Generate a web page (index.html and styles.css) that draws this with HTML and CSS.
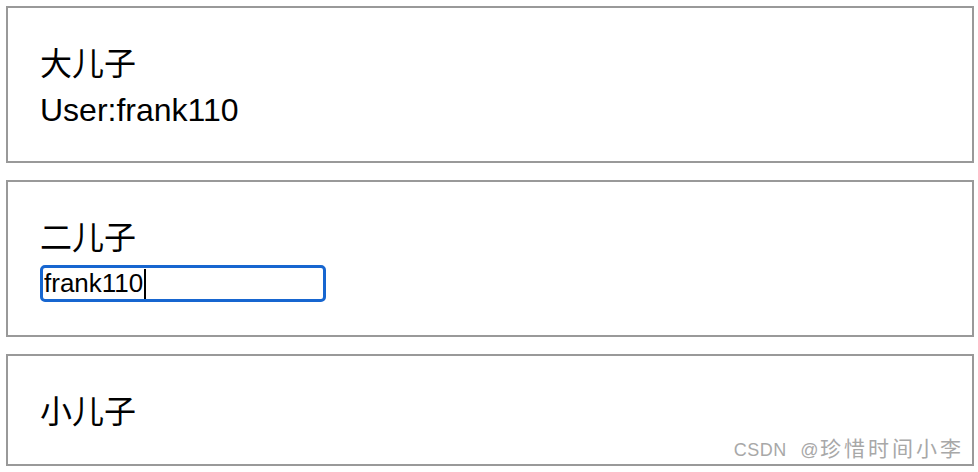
FILE: index.html
```html
<!DOCTYPE html>
<html lang="zh">
<head>
<meta charset="utf-8">
<title>Sons</title>
<link rel="stylesheet" href="styles.css">
</head>
<body>
<div class="page">
  <section class="card">
    <div class="row title">大儿子</div>
    <div class="row">User:frank110</div>
  </section>
  <section class="card">
    <div class="row title">二儿子</div>
    <div class="row input-row">
      <div class="field"><span class="value">frank110</span><span class="caret"></span></div>
    </div>
  </section>
  <section class="card">
    <div class="row title">小儿子</div>
  </section>
  <div class="watermark"><span class="wm-latin">CSDN @</span><span class="wm-cjk">珍惜时间小李</span></div>
</div>
</body>
</html>
```
FILE: styles.css
```css
html, body {
  margin: 0;
  padding: 0;
  background: #fff;
}
.page {
  position: relative;
  width: 978px;
  height: 472px;
  overflow: hidden;
  padding: 6px 4px 0 6px;
  box-sizing: border-box;
  display: flex;
  flex-direction: column;
  gap: 17px;
  font-family: "Liberation Sans", "Noto Sans CJK SC", sans-serif;
  color: #000;
}
.card {
  border: 2px solid #999;
  padding: 32px 32px 28px;
}
.row {
  height: 45px;
  line-height: 45px;
  font-size: 32px;
}
.row.title {
  height: 48px;
  line-height: 48px;
}
.input-row {
  box-sizing: border-box;
  padding-top: 3px;
}
.field {
  width: 279px;
  height: 31px;
  border: 3px solid #1766d0;
  border-radius: 5px;
  display: flex;
  align-items: center;
  padding-left: 1px;
  font-size: 26px;
  line-height: 31px;
}
.caret {
  display: inline-block;
  width: 2px;
  height: 30px;
  background: #000;
  margin-left: 1px;
}
.watermark {
  position: absolute;
  right: 14px;
  bottom: 10px;
  font-size: 21px;
  color: #a8a8a8;
  white-space: nowrap;
}
.wm-latin {
  font-size: 18px;
  letter-spacing: 0.5px;
  word-spacing: 8px;
}
.wm-cjk {
  letter-spacing: 3px;
  margin-left: 1px;
}
```
